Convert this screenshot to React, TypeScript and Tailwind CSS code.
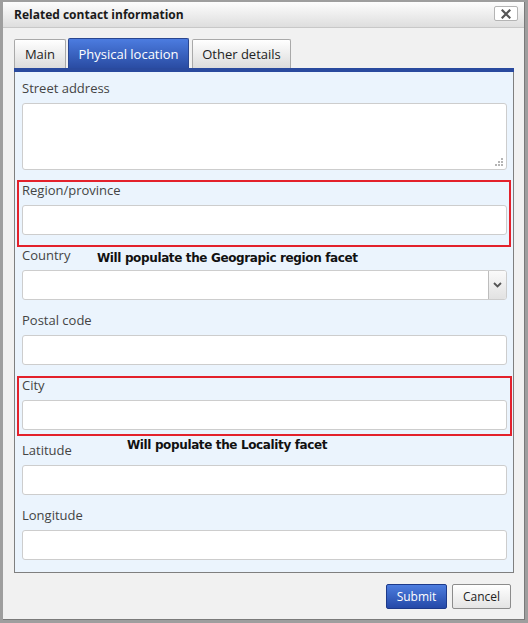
import type { ReactNode } from "react";

const FONT = { fontFamily: '"Open Sans", "Liberation Sans", sans-serif' };

function Field({ label, children }: { label: string; children?: ReactNode }) {
  return (
    <div className="mb-[12px] flex flex-col">
      <span className="mb-[7px] h-[16px] text-[13px] leading-[16px] text-[#444]">{label}</span>
      {children ?? <div className="h-[30px] rounded-[3px] border border-[#cdcdcd] bg-white" />}
    </div>
  );
}

function Note({ text, className }: { text: string; className: string }) {
  return (
    <span
      className={`absolute whitespace-nowrap text-[12px] font-bold leading-[14px] text-[#111] ${className}`}
      style={{ fontFamily: '"DejaVu Sans", "Liberation Sans", sans-serif', letterSpacing: "-0.37px" }}
    >
      {text}
    </span>
  );
}

export default function App() {
  return (
    <div className="h-[623px] w-[528px] bg-[#9e9e9e] pl-[3px] pt-[2px]" style={FONT}>
      <div className="flex h-[618px] w-[522px] flex-col border-r border-b border-[#7a7a7a] bg-[#f1f1f1]">
        {/* title bar */}
        <div className="flex h-[26px] items-center justify-between border-b border-[#c8c8c8] bg-gradient-to-b from-[#fdfdfd] to-[#dedede] pl-[11px] pr-[6px]">
          <span className="text-[12px] font-bold text-[#1a1a1a]">Related contact information</span>
          <button className="mt-[-2px] grid h-[15px] w-[24px] place-items-center rounded-[2px] border border-[#b4b4b4] bg-white">
            <svg width="10" height="10" viewBox="0 0 10 10">
              <path d="M1.5 1.5 L8.5 8.5 M8.5 1.5 L1.5 8.5" stroke="#555" strokeWidth="2.2" strokeLinecap="square" />
            </svg>
          </button>
        </div>

        <div className="flex flex-1 flex-col px-[11px] pt-[10px]">
          {/* tabs */}
          <div className="flex h-[30px] items-end text-[13px]">
            <div className="flex h-[29px] w-[52px] items-center justify-center rounded-t-[2px] border border-b-0 border-[#a9a9a9] bg-gradient-to-b from-white to-[#dcdcdc] pt-[2px] text-[#222]">
              Main
            </div>
            <div className="ml-[2px] flex h-[30px] w-[121px] items-center justify-center rounded-t-[2px] border border-b-0 border-[#2a4690] bg-gradient-to-b from-[#4c7ce0] to-[#2a4ca3] pt-[2px] text-white">
              Physical location
            </div>
            <div className="ml-[3px] flex h-[29px] w-[99px] items-center justify-center rounded-t-[2px] border border-b-0 border-[#a9a9a9] bg-gradient-to-b from-white to-[#dcdcdc] pt-[2px] text-[#222]">
              Other details
            </div>
          </div>

          {/* panel */}
          <div className="w-[500px] border-t-[4px] border-[#2a4a9e]">
            <div className="relative flex h-[501px] flex-col border-x border-b border-[#7f7f7f] bg-[#ebf4fd] pl-[7px] pr-[6px] pt-[8px]">
              <Field label="Street address">
                <div className="relative h-[67px] rounded-[3px] border border-[#cdcdcd] bg-white">
                  <svg className="absolute bottom-[2px] right-[2px]" width="9" height="9" viewBox="0 0 9 9">
                    <rect x="6" y="0" width="2" height="2" fill="#b5b5b5" />
                    <rect x="3" y="3" width="2" height="2" fill="#b5b5b5" />
                    <rect x="6" y="3" width="2" height="2" fill="#b5b5b5" />
                    <rect x="0" y="6" width="2" height="2" fill="#b5b5b5" />
                    <rect x="3" y="6" width="2" height="2" fill="#b5b5b5" />
                    <rect x="6" y="6" width="2" height="2" fill="#b5b5b5" />
                  </svg>
                </div>
              </Field>

              <div className="relative">
                <div className="pointer-events-none absolute -left-[5px] -right-[4px] -top-[2px] bottom-[0px] border-2 border-[#e3212b]" />
                <Field label="Region/province" />
              </div>

              <div className="relative">
                <Note text="Will populate the Geograpic region facet" className="left-[75px] top-[4px]" />
                <Field label="Country">
                  <div className="flex h-[30px] rounded-[3px] border border-[#cdcdcd] bg-white">
                    <div className="flex-1" />
                    <div className="grid w-[18px] place-items-center rounded-r-[2px] border-l border-[#bdbdbd] bg-gradient-to-b from-[#fafafa] to-[#e2e2e2]">
                      <svg width="9" height="6" viewBox="0 0 9 6">
                        <path d="M1 1 L4.5 4.5 L8 1" fill="none" stroke="#555" strokeWidth="1.8" />
                      </svg>
                    </div>
                  </div>
                </Field>
              </div>

              <Field label="Postal code" />

              <div className="relative">
                <div className="pointer-events-none absolute -left-[5px] -right-[5px] -top-[1px] bottom-[6px] border-2 border-[#e3212b]" />
                <Note text="Will populate the Locality facet" className="left-[105px] top-[61px]" />
                <Field label="City" />
              </div>

              <Field label="Latitude" />
              <Field label="Longitude" />
            </div>
          </div>

          {/* buttons */}
          <div className="mt-[11px] flex justify-end gap-[5px] pr-[2px] text-[12px]">
            <button className="h-[25px] w-[61px] rounded-[2px] border border-[#1d3a8a] bg-gradient-to-b from-[#4d7ddf] to-[#2549a8] text-white">
              Submit
            </button>
            <button className="h-[25px] w-[59px] rounded-[2px] border border-[#8c8c8c] bg-gradient-to-b from-white to-[#e4e4e4] text-[#222]">
              Cancel
            </button>
          </div>
        </div>
      </div>
    </div>
  );
}
